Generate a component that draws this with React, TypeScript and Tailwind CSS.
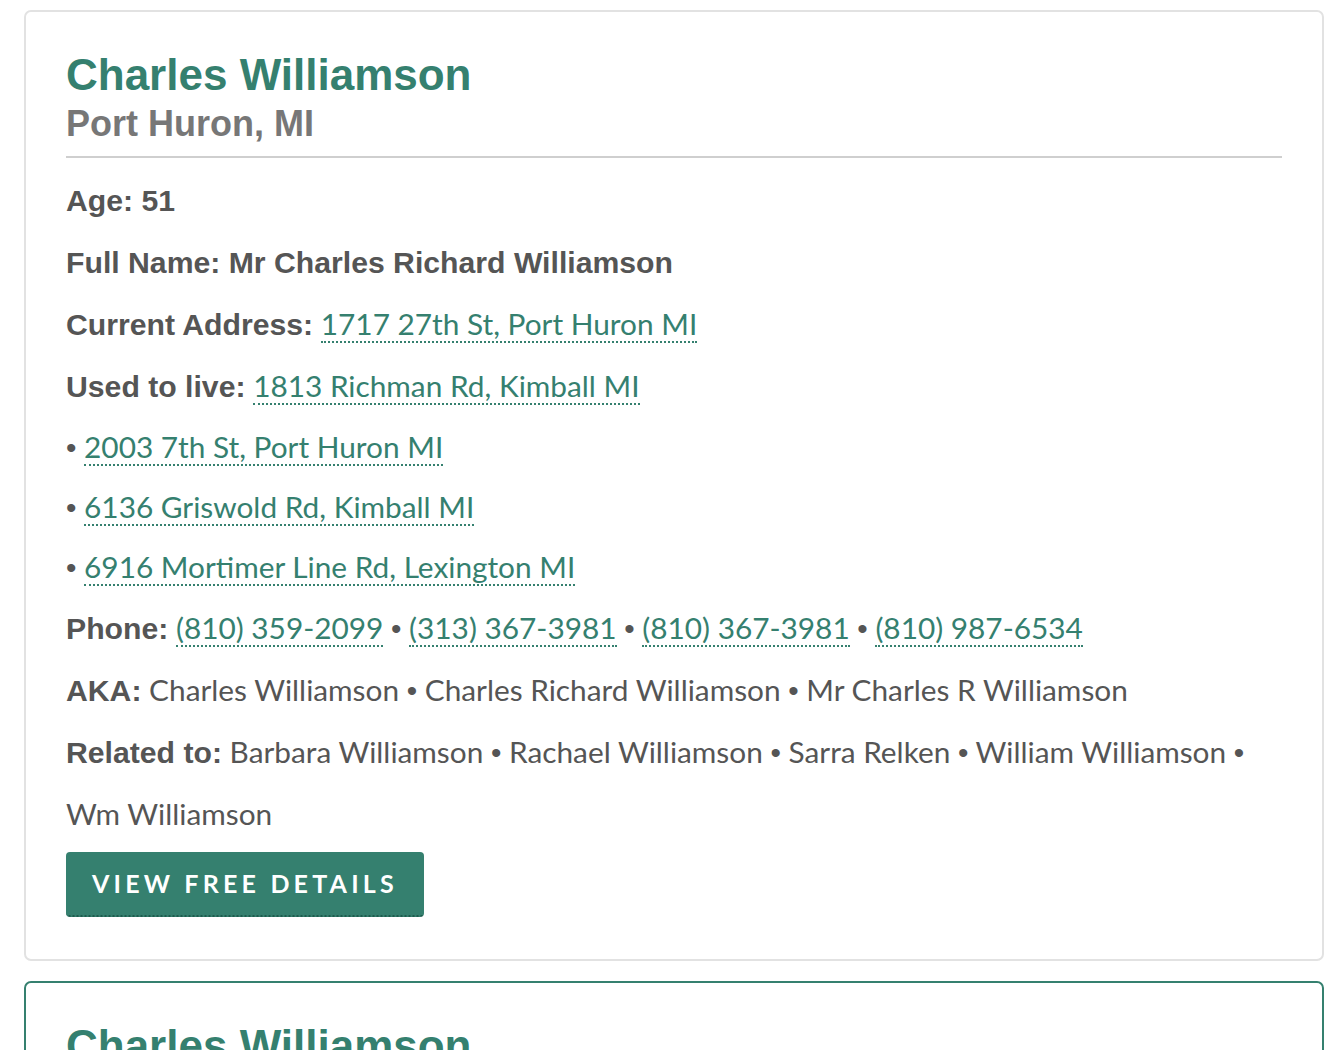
import React from "react";

const LIB = "font-['Liberation_Sans',Arial,sans-serif]";

function Link({ children }: { children: React.ReactNode }) {
  return (
    <a className="text-[#35806f] border-b-2 border-dotted border-[#35806f] font-['Lato',sans-serif]">
      {children}
    </a>
  );
}

function Dot() {
  return <span className={LIB}>•</span>;
}

function Sep() {
  return (
    <>
      {" "}
      <Dot />{" "}
    </>
  );
}

function Label({ children }: { children: React.ReactNode }) {
  return <b className={`${LIB} font-bold text-[30.2px]`}>{children}</b>;
}

function Row({ children, h = 62 }: { children: React.ReactNode; h?: 60 | 62 }) {
  return (
    <div className={h === 62 ? "h-[62px] leading-[62px]" : "h-[60px] leading-[60px]"}>
      {children}
    </div>
  );
}

function Card({ green }: { green?: boolean }) {
  return (
    <div
      className={`w-[1300px] shrink-0 border-2 rounded-[7px] bg-white px-[40px] pt-[39px] pb-[42px] ${
        green ? "border-[#35806f]" : "border-[#e2e2e2]"
      }`}
    >
      <div className="border-b-2 border-[#cfcfcf] pb-[12px]">
        <h2 className={`text-[#35806f] ${LIB} font-bold text-[44px] leading-[48px]`}>Charles Williamson</h2>
        <h3 className={`text-[#777777] ${LIB} font-bold text-[36px] leading-[40px] mt-[5px]`}>Port Huron, MI</h3>
      </div>
      <div className="mt-[11px] text-[#555555] text-[29.8px] font-['Lato',sans-serif]">
        <Row>
          <Label>Age: 51</Label>
        </Row>
        <Row>
          <Label>Full Name: Mr Charles Richard Williamson</Label>
        </Row>
        <Row>
          <Label>Current Address:</Label> <Link>1717 27th St, Port Huron MI</Link>
        </Row>
        <Row>
          <Label>Used to live:</Label> <Link>1813 Richman Rd, Kimball MI</Link>
        </Row>
        <Row h={60}>
          <Dot /> <Link>2003 7th St, Port Huron MI</Link>
        </Row>
        <Row h={60}>
          <Dot /> <Link>6136 Griswold Rd, Kimball MI</Link>
        </Row>
        <Row h={60}>
          <Dot /> <Link>6916 Mortimer Line Rd, Lexington MI</Link>
        </Row>
        <Row>
          <Label>Phone:</Label> <Link>(810) 359-2099</Link>
          <Sep />
          <Link>(313) 367-3981</Link>
          <Sep />
          <Link>(810) 367-3981</Link>
          <Sep />
          <Link>(810) 987-6534</Link>
        </Row>
        <Row>
          <Label>AKA:</Label> Charles Williamson
          <Sep />
          Charles Richard Williamson
          <Sep />
          Mr Charles R Williamson
        </Row>
        <Row>
          <span className="whitespace-nowrap">
            <Label>Related to:</Label> Barbara Williamson
            <Sep />
            Rachael Williamson
            <Sep />
            Sarra Relken
            <Sep />
            William Williamson <Dot />
          </span>
        </Row>
        <Row>Wm Williamson</Row>
        <button className="mt-[7px] bg-[#35806f] text-white rounded-[4px] border-b-2 border-dotted border-[#1f5c4e] h-[65px] px-[26px] font-['Lato',sans-serif] font-bold text-[25px] tracking-[4.2px] leading-none">
          VIEW FREE DETAILS
        </button>
      </div>
    </div>
  );
}

export default function App() {
  return (
    <div className="bg-white pl-[24px] pt-[10px] flex flex-col gap-[20px] overflow-hidden h-[1050px]">
      <Card />
      <Card green />
    </div>
  );
}
